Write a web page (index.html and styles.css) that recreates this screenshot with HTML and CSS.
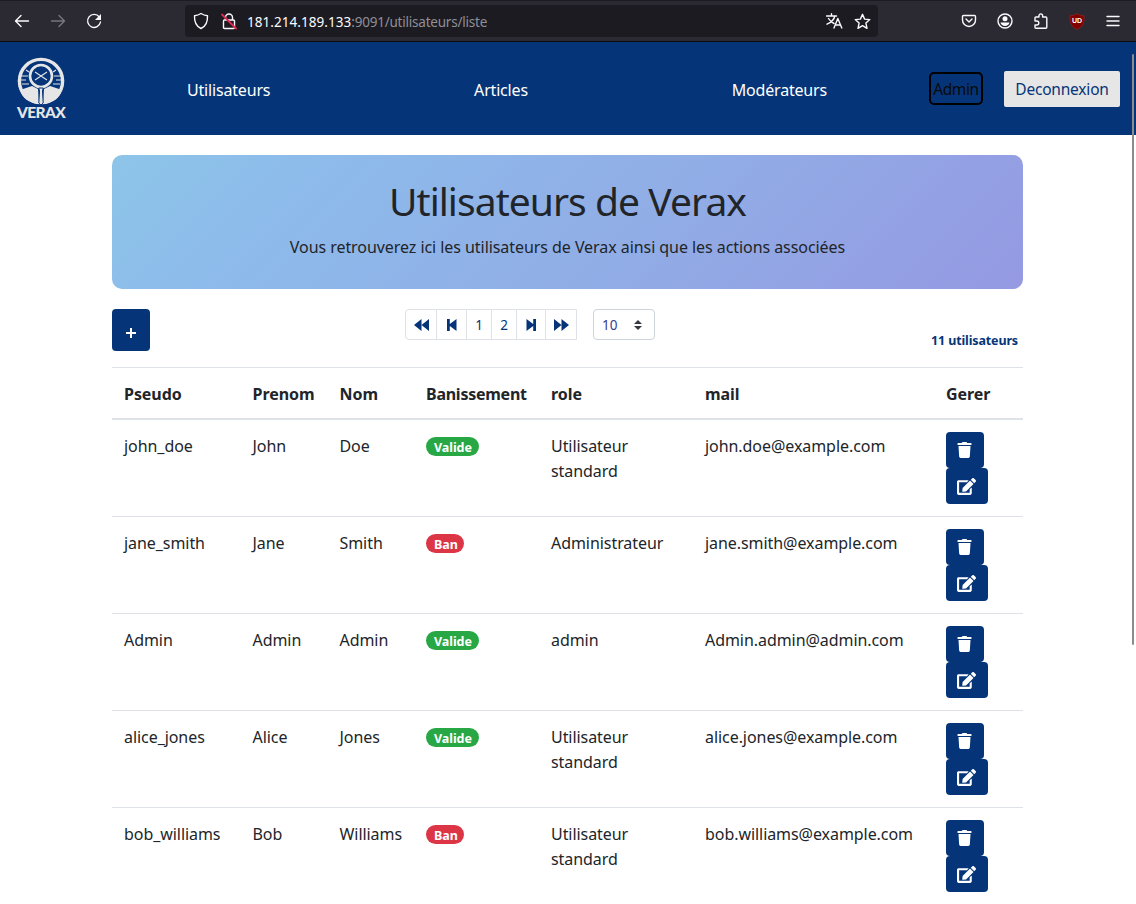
FILE: index.html
```html
<!DOCTYPE html>
<html lang="fr">
<head>
<meta charset="utf-8">
<title>Utilisateurs de Verax</title>
<link rel="stylesheet" href="styles.css">
</head>
<body>
<svg class="defs" width="0" height="0" aria-hidden="true">
  <symbol id="trash" viewBox="0 0 448 512"><path d="M432 32H312l-9.400-18.700A24 24 0 0 0 281.100 0H166.800a23.700 23.700 0 0 0-21.400 13.300L136 32H16A16 16 0 0 0 0 48v32a16 16 0 0 0 16 16h416a16 16 0 0 0 16-16V48a16 16 0 0 0-16-16zM53.200 467a48 48 0 0 0 47.900 45h245.800a48 48 0 0 0 47.900-45L416 128H32z"/></symbol>
  <symbol id="edit" viewBox="0 0 576 512"><path d="M402.600 83.200l90.200 90.200c3.800 3.800 3.800 10 0 13.800L274.400 405.600l-92.800 10.300c-12.400 1.400-22.900-9.100-21.500-21.500l10.300-92.800L388.800 83.200c3.800-3.800 10-3.800 13.800 0zm162-22.900l-48.800-48.800c-15.200-15.200-39.900-15.200-55.200 0l-35.400 35.400c-3.800 3.800-3.800 10 0 13.800l90.200 90.200c3.800 3.800 10 3.800 13.800 0l35.400-35.400c15.200-15.300 15.200-40 0-55.200zM384 346.200V448H64V128h229.800c3.200 0 6.200-1.300 8.500-3.500l40-40c7.600-7.600 2.200-20.500-8.500-20.500H48C21.500 64 0 85.500 0 112v352c0 26.500 21.500 48 48 48h352c26.500 0 48-21.500 48-48V306.200c0-10.700-12.900-16-20.500-8.500l-40 40c-2.200 2.300-3.500 5.300-3.500 8.500z"/></symbol>
</svg>

<header class="browser">
  <div class="nav-buttons">
    <svg width="16" height="16" viewBox="0 0 16 16"><path d="M14.500 8H1.800M7 2.500L1.500 8 7 13.500"/></svg>
    <svg class="dim" width="16" height="16" viewBox="0 0 16 16"><path d="M1.500 8h12.700M9 2.500L14.500 8 9 13.500"/></svg>
    <svg width="16" height="16" viewBox="0 0 16 16"><path d="M13.300 4A6.500 6.500 0 1 0 14.500 9"/><path class="solid" d="M15 1v6H9z"/></svg>
  </div>
  <div class="url-bar">
    <svg width="16" height="18" viewBox="0 0 16 18"><path d="M8 1.500c2.500 1.600 4.200 2 6.500 2.200.3 6.300-1.500 10.500-6.500 12.800-5-2.300-6.800-6.500-6.500-12.800C3.800 3.500 5.500 3.100 8 1.500z"/></svg>
    <svg class="lock" width="16" height="18" viewBox="0 0 16 18"><path d="M4.500 8V5.500a3.500 3.500 0 0 1 7 0V8M3.500 8h9q1 0 1 1v6.500q0 1-1 1h-9q-1 0-1-1V9q0-1 1-1z"/><path class="slash" d="M1 2.500L15 16.500"/></svg>
    <span class="address"><b>181.214.189.133</b>:9091/utilisateurs/liste</span>
    <svg width="17" height="16" viewBox="0 0 17 16"><path d="M.5 3h10M5.500.8V3M8.800 3C8 7 5 9.500 1 11.200M2.500 5.500C4 8 6 9.500 8 10.500M8 15l3.800-9.500L15.800 15M9.300 12h5.200"/></svg>
    <svg class="star" width="17" height="17" viewBox="0 0 17 17"><path d="M8.500 1.300l2.100 4.800 5.200.5-3.900 3.500 1.100 5.200-4.500-2.700L4 15.300l1.100-5.200-3.900-3.500 5.200-.5z"/></svg>
  </div>
  <div class="tools">
    <svg width="16" height="16" viewBox="0 0 16 16"><path d="M2.500 2.500h11q1 0 1 1V7a6.500 6.500 0 0 1-13 0V3.500q0-1 1-1zM5 6l3 3 3-3"/></svg>
    <svg width="16" height="16" viewBox="0 0 16 16"><circle cx="8" cy="8" r="7"/><circle class="solid" cx="8" cy="5.700" r="2.500"/><path class="solid" d="M3.500 9.500h9c-.3 2-2.400 3.500-4.500 3.500S3.800 11.500 3.500 9.500z"/></svg>
    <svg width="16" height="16" viewBox="0 0 16 16"><path d="M2 8V5q0-1 1-1h3V2.700a1.800 1.800 0 0 1 3.600 0V4h3.200q1 0 1 1v9.300q0 1-1 1H3q-1 0-1-1V12h1.800a2 2 0 0 0 0-4z"/></svg>
    <span class="ublock"><svg width="16" height="17" viewBox="0 0 16 17"><path d="M8 .7c2 1.500 4.300 2 7 2 .5 7-1 11-7 13.600C2 13.700.5 9.700 1 2.700c2.700 0 5-.5 7-2z"/></svg><i>UD</i></span>
    <svg width="16" height="16" viewBox="0 0 16 16"><path d="M2 3.500h12M2 8h12M2 12.500h12"/></svg>
  </div>
</header>

<nav class="navbar">
  <a class="brand">
    <svg width="48" height="48" viewBox="0 0 48 48">
      <circle class="ring" cx="24" cy="24" r="21.600"/>
      <path class="ticks" d="M4 19h7M4 23h5M5 27h7M44 19h-7M44 23h-5M43 27h-7M9 13l3 2M39 13l-3 2"/>
      <path class="suit" d="M15 29l6 3 1 15C12 46 5 41 3 33zM33 29l-6 3-1 15c10-1 17-6 19-14z"/>
      <circle class="lens" cx="24" cy="19" r="11"/>
      <path class="cross" d="M18 15l12 8M18 23l12-8"/>
      <path class="handle" d="M21.800 31h4.400l-.7 3 .7 12-2.200 2-2.200-2 .7-12z"/>
    </svg>
    <span>VERAX</span>
  </a>
  <div class="links"><a>Utilisateurs</a><a>Articles</a><a>Modérateurs</a></div>
  <span class="account">Admin</span>
  <button class="logout">Deconnexion</button>
</nav>

<main class="page">
  <section class="hero">
    <h1>Utilisateurs de Verax</h1>
    <p>Vous retrouverez ici les utilisateurs de Verax ainsi que les actions associées</p>
  </section>
  <div class="controls">
    <button class="add"><svg width="10" height="10" viewBox="0 0 10 10"><path d="M5 0v10M0 5h10"/></svg></button>
    <div class="pager">
      <a><svg width="15" height="12" viewBox="0 0 15 12"><path d="M7.500 0v12L0 6zM15 0v12L7.500 6z"/></svg></a>
      <a><svg width="10" height="12" viewBox="0 0 10 12"><path d="M0 0h2.800v5L9.500 0v12L2.800 7v5H0z"/></svg></a>
      <a>1</a>
      <a>2</a>
      <a><svg width="10" height="12" viewBox="0 0 10 12"><path d="M10 0H7.200v5L.5 0v12l6.700-5v5H10z"/></svg></a>
      <a><svg width="15" height="12" viewBox="0 0 15 12"><path d="M0 0v12l7.500-6zM7.500 0v12L15 6z"/></svg></a>
    </div>
    <div class="size">10<svg width="8" height="10" viewBox="0 0 8 10"><path d="M4 0l4 4H0zM4 10l4-4H0z"/></svg></div>
    <span class="count">11 utilisateurs</span>
  </div>

  <table class="users">
    <colgroup><col class="c1"><col class="c2"><col class="c3"><col class="c4"><col class="c5"><col class="c6"><col class="c7"></colgroup>
    <thead><tr><th>Pseudo</th><th>Prenom</th><th>Nom</th><th>Banissement</th><th>role</th><th>mail</th><th>Gerer</th></tr></thead>
    <tbody>
      <tr><td>john_doe</td><td>John</td><td>Doe</td><td><span class="badge ok">Valide</span></td><td>Utilisateur<br>standard</td><td>john.doe@example.com</td><td><div class="actions"><button class="del"><svg><use href="#trash"/></svg></button><button class="mod"><svg><use href="#edit"/></svg></button></div></td></tr>
      <tr><td>jane_smith</td><td>Jane</td><td>Smith</td><td><span class="badge ban">Ban</span></td><td>Administrateur</td><td>jane.smith@example.com</td><td><div class="actions"><button class="del"><svg><use href="#trash"/></svg></button><button class="mod"><svg><use href="#edit"/></svg></button></div></td></tr>
      <tr><td>Admin</td><td>Admin</td><td>Admin</td><td><span class="badge ok">Valide</span></td><td>admin</td><td>Admin.admin@admin.com</td><td><div class="actions"><button class="del"><svg><use href="#trash"/></svg></button><button class="mod"><svg><use href="#edit"/></svg></button></div></td></tr>
      <tr><td>alice_jones</td><td>Alice</td><td>Jones</td><td><span class="badge ok">Valide</span></td><td>Utilisateur<br>standard</td><td>alice.jones@example.com</td><td><div class="actions"><button class="del"><svg><use href="#trash"/></svg></button><button class="mod"><svg><use href="#edit"/></svg></button></div></td></tr>
      <tr><td>bob_williams</td><td>Bob</td><td>Williams</td><td><span class="badge ban">Ban</span></td><td>Utilisateur<br>standard</td><td>bob.williams@example.com</td><td><div class="actions"><button class="del"><svg><use href="#trash"/></svg></button><button class="mod"><svg><use href="#edit"/></svg></button></div></td></tr>
    </tbody>
  </table>
</main>
<div class="scrollbar"></div>
</body>
</html>
```
FILE: styles.css
```css
* { box-sizing: border-box; }
body { margin: 0; height: 904px; overflow: hidden; background: #fff; color: #212529; font: 16px/25px "Noto Sans", sans-serif; letter-spacing: -0.06px; }
svg { display: block; flex: none; }
button { font: inherit; border: 0; padding: 0; display: flex; align-items: center; justify-content: center; }
.defs { position: absolute; }

.browser { height: 42px; background: #2b2a33; border-top: 1px solid #1c1b22; border-bottom: 1px solid #0c0c0d; display: flex; align-items: center; }
.browser svg { fill: none; stroke: #fbfbfe; stroke-width: 1.4; stroke-linejoin: round; stroke-linecap: round; }
.browser .dim { stroke: #77767d; }
.browser .solid { fill: #fbfbfe; stroke: none; }
.nav-buttons { display: flex; gap: 20px; width: 185px; padding-left: 14px; }
.url-bar { width: 693px; height: 32px; background: #1c1b22; border-radius: 4px; display: flex; align-items: center; padding: 0 7px 0 8px; }
.url-bar .lock { margin: 0 10px 0 12px; }
.url-bar .slash { stroke: #e22850; stroke-width: 1.8; }
.address { flex: 1; padding-top: 2px; font-size: 13.500px; color: #8f8f96; letter-spacing: -0.22px; }
.address b { font-weight: 400; color: #fbfbfe; letter-spacing: 0.05px; }
.url-bar .star { margin-left: 11px; }
.tools { display: flex; gap: 20px; padding-left: 83px; }
.ublock { display: grid; place-items: center; }
.ublock svg, .ublock i { grid-area: 1 / 1; }
.browser .ublock svg { fill: #800000; stroke: #9c2020; stroke-width: 0.7; }
.ublock i { z-index: 1; font: 700 7px/8px "Liberation Sans", sans-serif; color: #fff; }

.navbar { height: 93px; background: #053578; color: #fff; display: flex; align-items: center; padding: 3px 16px 0 17px; }
.brand { width: 48px; height: 64px; display: flex; flex-direction: column; align-items: center; }
.brand svg { margin-top: -1px; }
.brand span { font: 900 15.500px/14px Lato, sans-serif; color: #e6e6e6; letter-spacing: -0.6px; }
.ring { fill: none; stroke: #e6e6e6; stroke-width: 3.4; }
.ticks { stroke: #e6e6e6; stroke-width: 1.2; }
.suit { fill: #e6e6e6; }
.lens { fill: #053578; stroke: #e6e6e6; stroke-width: 2.600; }
.cross { stroke: #e6e6e6; stroke-width: 1.1; }
.handle { fill: #e6e6e6; stroke: #053578; stroke-width: 1; }
.links { flex: 1; display: flex; justify-content: space-between; padding: 0 102px 0 122px; letter-spacing: -0.18px; }
.account { width: 54px; height: 33px; margin: -4px 21px 0 0; border: 2px solid #000; border-radius: 5px; color: #0a0a0a; line-height: 31px; text-align: center; font-size: 15.500px; letter-spacing: -0.4px; }
.logout { width: 116px; height: 36px; margin-top: -2px; padding-top: 1px; background: #e6e6e6; color: #053578; border-radius: 2px; font-size: 15.500px; letter-spacing: -0.2px; }

.page { width: 911px; margin: 20px 0 0 112px; }
.hero { height: 134px; border-radius: 10px; background: linear-gradient(135deg, #8dc5e8, #8dbceb 18%, #91ace6 60%, #9599e2); text-align: center; padding: 22px 0 0; }
.hero h1 { margin: 0; font-size: 39px; line-height: 48px; font-weight: 400; letter-spacing: -0.95px; }
.hero p { margin: 10px 0 0; }
.controls { height: 58px; margin-top: 20px; display: flex; align-items: flex-start; color: #053578; }
.add { width: 38px; height: 42px; padding-top: 6px; background: #053578; border-radius: 4px; }
.add svg { stroke: #fff; stroke-width: 2; }
.pager { width: 172px; height: 31px; margin-left: 255px; display: flex; font-size: 13.500px; border: 1px solid #dee2e6; border-radius: 4px 0 0 4px; }
.pager a { width: 25px; padding-top: 1px; display: flex; align-items: center; justify-content: center; border-left: 1px solid #dee2e6; }
.pager a:first-child { border: 0; }
.pager a:nth-child(1) { width: 30px; }
.pager a:nth-child(2) { width: 30px; }
.pager a:nth-child(5) { width: 29px; }
.pager a:nth-child(6) { width: 31px; }
.pager svg { fill: #053578; }
.size { width: 62px; height: 31px; margin-left: 16px; border: 1px solid #ced4da; border-radius: 4px; padding: 1px 12px 0 8px; display: flex; align-items: center; justify-content: space-between; font-size: 13.500px; color: #3b3990; }
.size svg { fill: #343a40; }
.count { margin: 19px 5px 0 auto; font-size: 12.500px; letter-spacing: -0.13px; font-weight: 700; }

.users { width: 911px; table-layout: fixed; border-spacing: 0; }
.c1 { width: 128.500px; }
.c2 { width: 87px; }
.c3 { width: 86.500px; }
.c4 { width: 125px; }
.c5 { width: 154px; }
.c6 { width: 241px; }
.c7 { width: 89px; }
.users th { height: 53px; border-top: 1px solid #dee2e6; border-bottom: 2px solid #dee2e6; padding: 2px 0 0 12px; text-align: left; }
.users td { padding: 14px 0 10px 12px; vertical-align: top; border-top: 1px solid #dee2e6; white-space: nowrap; }
.users td:last-child { padding: 12px 0 12px 12px; }
.users th:nth-child(4) { letter-spacing: -0.25px; }
.users tbody tr:first-child td { border-top: 0; }
.badge { display: block; width: max-content; height: 19px; margin-top: 3px; padding: 0 8px; border-radius: 10px; color: #fff; font-size: 12.500px; line-height: 21px; font-weight: 700; }
.ok { background: #28a745; width: 53px; }
.ban { background: #dc3545; width: 38px; }
.actions { display: flex; flex-direction: column; }
.actions button { height: 36px; background: #053578; border-radius: 4px; }
.actions svg { fill: #fff; margin: 0 1px 0 0; }
.del { width: 38px; }
.mod { width: 42px; }
.del svg { width: 15px; height: 16px; }
.mod svg { width: 19px; height: 17px; }
.scrollbar { position: absolute; left: 1132px; top: 54px; width: 2px; height: 591px; background: #8c8c8c; border-radius: 1px; }
```
